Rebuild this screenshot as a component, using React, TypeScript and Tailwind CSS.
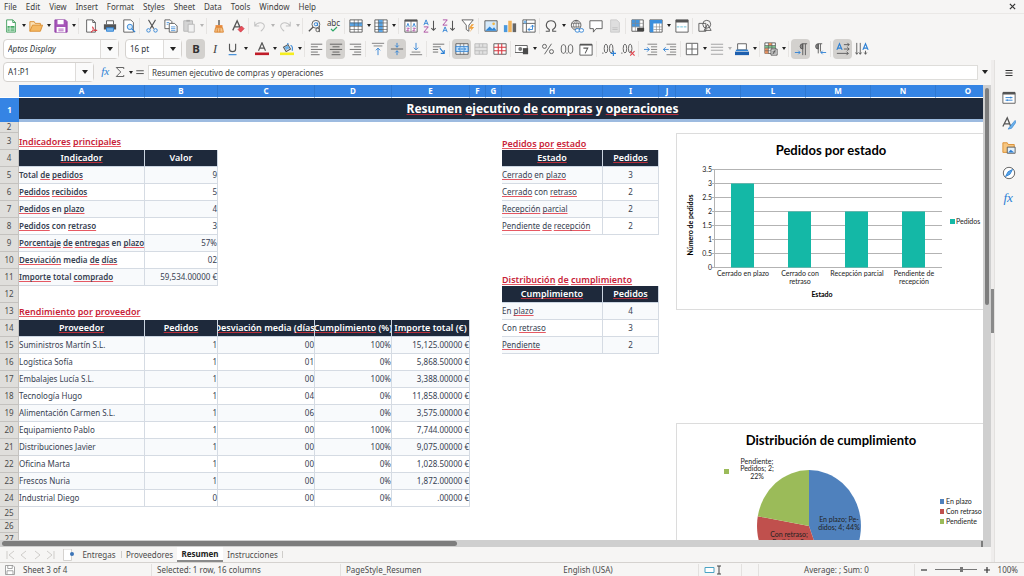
import type { ReactNode } from 'react';
import clsx from 'clsx';

type Cell = { text: string; kind: 'heading' | 'headingLow' | 'head' | 'label' | 'text' | 'plain' | 'num' | 'center' };

const COLUMNS = [
  { name: 'A', width: 126 },
  { name: 'B', width: 73 },
  { name: 'C', width: 97 },
  { name: 'D', width: 77 },
  { name: 'E', width: 78 },
  { name: 'F', width: 16 },
  { name: 'G', width: 16 },
  { name: 'H', width: 101 },
  { name: 'I', width: 56 },
  { name: 'J', width: 17 },
  { name: 'K', width: 65 },
  { name: 'L', width: 65 },
  { name: 'M', width: 65 },
  { name: 'N', width: 65 },
  { name: 'O', width: 65 },
];

const indicators = [
  ['Total de pedidos', '9'],
  ['Pedidos recibidos', '5'],
  ['Pedidos en plazo', '4'],
  ['Pedidos con retraso', '3'],
  ['Porcentaje de entregas en plazo', '57%'],
  ['Desviación media de días', '02'],
  ['Importe total comprado', '59,534.00000 €'],
];

const suppliers = [
  ['Suministros Martín S.L.', '1', '00', '100%', '15,125.00000 €'],
  ['Logística Sofía', '1', '01', '0%', '5,868.50000 €'],
  ['Embalajes Lucía S.L.', '1', '00', '100%', '3,388.00000 €'],
  ['Tecnología Hugo', '1', '04', '0%', '11,858.00000 €'],
  ['Alimentación Carmen S.L.', '1', '06', '0%', '3,575.00000 €'],
  ['Equipamiento Pablo', '1', '00', '100%', '7,744.00000 €'],
  ['Distribuciones Javier', '1', '00', '100%', '9,075.00000 €'],
  ['Oficina Marta', '1', '00', '0%', '1,028.50000 €'],
  ['Frescos Nuria', '1', '00', '0%', '1,872.00000 €'],
  ['Industrial Diego', '0', '00', '0%', '.00000 €'],
];

const cells: Record<string, Cell> = {
  A3: { text: 'Indicadores principales', kind: 'heading' },
  A4: { text: 'Indicador', kind: 'head' },
  B4: { text: 'Valor', kind: 'head' },
  A13: { text: 'Rendimiento por proveedor', kind: 'heading' },
  A14: { text: 'Proveedor', kind: 'head' },
  B14: { text: 'Pedidos', kind: 'head' },
  C14: { text: 'Desviación media (días)', kind: 'head' },
  D14: { text: 'Cumplimiento (%)', kind: 'head' },
  E14: { text: 'Importe total (€)', kind: 'head' },
  H3: { text: 'Pedidos por estado', kind: 'headingLow' },
  H4: { text: 'Estado', kind: 'head' },
  I4: { text: 'Pedidos', kind: 'head' },
  H11: { text: 'Distribución de cumplimiento', kind: 'headingLow' },
  H12: { text: 'Cumplimiento', kind: 'head' },
  I12: { text: 'Pedidos', kind: 'head' },
};

indicators.forEach(([name, value], i) => {
  cells[`A${5 + i}`] = { text: name, kind: 'label' };
  cells[`B${5 + i}`] = { text: value, kind: 'num' };
});
suppliers.forEach((row, i) => {
  cells[`A${15 + i}`] = { text: row[0], kind: 'plain' };
  ['B', 'C', 'D', 'E'].forEach((col, c) => {
    cells[`${col}${15 + i}`] = { text: row[c + 1], kind: 'num' };
  });
});
[['Cerrado en plazo', '3'], ['Cerrado con retraso', '2'], ['Recepción parcial', '2'], ['Pendiente de recepción', '2']].forEach(([name, n], i) => {
  cells[`H${5 + i}`] = { text: name, kind: 'text' };
  cells[`I${5 + i}`] = { text: n, kind: 'center' };
});
[['En plazo', '4'], ['Con retraso', '3'], ['Pendiente', '2']].forEach(([name, n], i) => {
  cells[`H${13 + i}`] = { text: name, kind: 'text' };
  cells[`I${13 + i}`] = { text: n, kind: 'center' };
});

// words that the English dictionary accepts
const KNOWN = ['total', 'en', 'con', 'media', 'valor', 'y', '(%)', '(€)'];

function Spelled({ text }: { text: string }) {
  return (
    <span>
      {text.split(' ').map((word, i) => (
        <span key={i}>
          {i > 0 && ' '}
          {KNOWN.includes(word.toLowerCase()) ? word : (
            <span className="underline decoration-[#e0303c]/80 decoration-1 underline-offset-1 [text-decoration-skip-ink:none]">{word}</span>
          )}
        </span>
      ))}
    </span>
  );
}

function SheetCell({ cell, row }: { cell?: Cell; row: number }) {
  if (!cell) return <td className="p-0" />;
  const { kind, text } = cell;
  if (kind === 'heading' || kind === 'headingLow') {
    return (
      <td className={clsx('p-0 text-[9px] leading-3 font-semibold whitespace-nowrap text-[#c81e3a]', kind === 'heading' ? 'align-middle' : 'align-bottom')}>
        <Spelled text={text} />
      </td>
    );
  }
  if (kind === 'head') {
    return (
      <td className="border-r border-b border-[#cbd5e1] bg-[#1e293b] p-0 text-[9px] leading-3 font-semibold text-white">
        <div className="flex justify-center overflow-hidden whitespace-nowrap"><Spelled text={text} /></div>
      </td>
    );
  }
  return (
    <td
      className={clsx(
        'border-r border-b border-[#d5dbe3] p-0 text-[8px] leading-3 whitespace-nowrap text-[#374151]',
        row % 2 === 1 ? 'bg-[#f8fafc]' : 'bg-white',
        kind === 'label' && 'font-semibold',
        kind === 'num' && 'text-right',
        kind === 'center' && 'text-center',
      )}
    >
      {kind === 'label' || kind === 'text' ? <Spelled text={text} /> : text}
    </td>
  );
}

function rowHeight(n: number) {
  if (n === 2) return 'h-[11px]';
  if (n > 24) return 'h-[13px]';
  return 'h-[17px]';
}

function SheetTable() {
  const rows = Array.from({ length: 26 }, (_, i) => i + 2);
  return (
    <table className="w-[1066px] table-fixed border-separate border-spacing-0">
      <colgroup>
        <col className="w-[19px]" />
        {COLUMNS.map(c => <col key={c.name} style={{ width: c.width }} />)}
        <col className="w-[65px]" />
      </colgroup>
      <thead>
        <tr className="h-[13px] text-[8px] leading-3 font-bold text-white">
          <td className="border-b border-white bg-[#f6f5f4] p-0" />
          {COLUMNS.map(c => <th key={c.name} scope="col" className="border-r border-b border-r-[#2f78d0] border-b-white bg-[#3584e4] p-0">{c.name}</th>)}
          <td className="border-b border-white bg-[#3584e4] p-0" />
        </tr>
      </thead>
      <tbody>
        <tr className="h-6">
          <th scope="row" className="bg-[#3584e4] p-0 text-[8px] leading-3 font-bold text-white">1</th>
          <td colSpan={16} className="border-b-3 border-[#9dbbe0] bg-[#1e293b] p-0 text-center text-[12px] leading-4 font-bold text-white">
            <Spelled text="Resumen ejecutivo de compras y operaciones" />
          </td>
        </tr>
        {rows.map(n => (
          <tr key={n} className={rowHeight(n)}>
            <th scope="row" className="border-r border-b border-[#c4c2bf] bg-[#dfdedb] p-0 text-[8px] leading-[10px] font-normal text-[#4b4b4b]">{n}</th>
            {COLUMNS.map(c => <SheetCell key={c.name} cell={cells[c.name + n]} row={n} />)}
          </tr>
        ))}
      </tbody>
    </table>
  );
}

function BarChart() {
  const ticks = ['3.5', '3', '2.5', '2', '1.5', '1', '0.5', '0'];
  const bars = [
    { lines: ['Cerrado en plazo'], value: 3 },
    { lines: ['Cerrado con', 'retraso'], value: 2 },
    { lines: ['Recepción parcial'], value: 2 },
    { lines: ['Pendiente de', 'recepción'], value: 2 },
  ];
  return (
    <svg width="310" height="177" viewBox="0 0 310 177" className="font-[Lato,sans-serif]" role="img" aria-label="Pedidos por estado">
      <rect x="0.5" y="0.5" width="309" height="176" fill="#fff" stroke="#dcdcdc" />
      <text x="155" y="22" fontSize="13" fontWeight="700" textAnchor="middle">Pedidos por estado</text>
      {ticks.map((t, i) => (
        <g key={t}>
          <line x1="36" x2="266" y1={36.5 + i * 14} y2={36.5 + i * 14} stroke="#b3b3b3" />
          <text x="36" y={39 + i * 14} fontSize="7" textAnchor="end" fill="#222">{t}</text>
        </g>
      ))}
      <line x1="38.5" x2="38.5" y1="36" y2="135" stroke="#b3b3b3" />
      {bars.map((b, i) => (
        <g key={b.lines[0]}>
          <rect x={55 + i * 57} y={134.5 - b.value * 28} width="23" height={b.value * 28} fill="#14b8a6" />
          {b.lines.map((l, j) => (
            <text key={l} x={67 + i * 57} y={143 + j * 8} fontSize="7" textAnchor="middle" fill="#222">{l}</text>
          ))}
        </g>
      ))}
      <text x="146" y="164" fontSize="7" fontWeight="700" textAnchor="middle">Estado</text>
      <text transform="translate(17 92) rotate(-90)" fontSize="7" fontWeight="700" textAnchor="middle">Número de pedidos</text>
      <rect x="274" y="86" width="5" height="5" fill="#14b8a6" />
      <text x="280" y="91" fontSize="7" fill="#222">Pedidos</text>
    </svg>
  );
}

function PieChart() {
  const legend = [['En plazo', '#4f81bd'], ['Con retraso', '#c0504d'], ['Pendiente', '#9bbb59']];
  return (
    <svg width="310" height="177" viewBox="0 0 310 177" className="font-[Lato,sans-serif]" role="img" aria-label="Distribución de cumplimiento">
      <rect x="0.5" y="0.5" width="309" height="176" fill="#fff" stroke="#dcdcdc" />
      <text x="155" y="22" fontSize="13" fontWeight="700" textAnchor="middle">Distribución de cumplimiento</text>
      <path d="M133 103V47A52 56 0 0 1 150.8 155.6Z" fill="#4f81bd" />
      <path d="M133 103L150.8 155.6A52 56 0 0 1 81.8 93.3Z" fill="#c0504d" />
      <path d="M133 103L81.8 93.3A52 56 0 0 1 133 47Z" fill="#9bbb59" />
      <rect x="48" y="46" width="5" height="5" fill="#9bbb59" />
      <g fontSize="7" textAnchor="middle" fill="#222">
        <text x="81" y="41">Pendiente;</text>
        <text x="81" y="48">Pedidos; 2;</text>
        <text x="81" y="56">22%</text>
        <text x="163" y="99">En plazo; Pe-</text>
        <text x="163" y="107">didos; 4; 44%</text>
        <text x="113" y="114">Con retraso;</text>
        <text x="113" y="122">Pedidos; 3;</text>
        <text x="113" y="130">33%</text>
      </g>
      {legend.map(([name, color], i) => (
        <g key={name}>
          <rect x="264" y={76 + i * 10} width="4" height="5" fill={color} />
          <text x="270" y={81 + i * 10} fontSize="7" fill="#222">{name}</text>
        </g>
      ))}
    </svg>
  );
}

// icon strokes
const G = '#555';
const B = '#2a7fd4';
const lines = (d: string, color = G, w = 1) => <path d={d} stroke={color} strokeWidth={w} fill="none" />;

const ICONS: Record<string, ReactNode> = {
  new: <><path d="M3 1h7l3 3v11H3z" fill="#fff" stroke="#3a9a57" /><path d="M10 1v3h3" fill="none" stroke="#3a9a57" /><path d="M4 8h8v6H4z" fill="#43a862" />{lines('M4 10.500h8M4 12.500h8M7 8v6', '#fff', 0.7)}</>,
  open: <><path d="M1 14V3h5l1 2h6v3" fill="#fbe1b5" stroke="#d98a2b" /><path d="M1 14L4 7h11.500l-2.500 7z" fill="#f5b963" stroke="#d98a2b" /></>,
  save: <><path d="M1 1h12l2 2v12H1z" fill="#a655b8" stroke="#8e3aa3" /><path d="M4 1h7v5H4zM3 9h10v6H3z" fill="#fff" />{lines('M5 11.500h6M5 13.500h6', '#a655b8')}</>,
  pdf: <><path d="M3 1h7l3 3v11H3z" fill="#fff" stroke={G} />{lines('M10 1v3h3')}<path d="M8 15c3-2 3-5 2-6s0 4 5 4c-3 0-5 0-7 2z" fill="none" stroke="#d8363f" /></>,
  print: <><path d="M4 6V2h8v4" fill="#fff" stroke={G} /><path d="M1 6h14v6H1z" fill="#555" /><path d="M4 10h8v4H4z" fill="#7ab6ea" stroke={B} /></>,
  preview: <><path d="M2 1h8l3 3v11H2z" fill="#fff" stroke={G} /><circle cx="9" cy="9" r="3" fill="#d6eafa" stroke={B} />{lines('M11 11l4 4', B, 1.5)}</>,
  cut: <>{lines('M4 1l6 10M12 1L6 11', G, 1.2)}<circle cx="4" cy="13" r="2" fill="none" stroke={B} /><circle cx="12" cy="13" r="2" fill="none" stroke={B} /></>,
  copy: <><path d="M1 1h6l2 2v8H1z" fill="#fff" stroke={G} /><path d="M6 5h6l3 3v7H6z" fill="#fff" stroke={G} />{lines('M8 9h5M8 11h5M8 13h5M3 4h3M3 6h2', B, 0.8)}</>,
  paste: <><path d="M2 2h10v12H2z" fill="#d4d4d4" stroke="#b5b5b5" /><path d="M5 1h4v2H5z" fill="#aaa" /><path d="M7 6h7v9H7z" fill="#f1f1f1" stroke="#b5b5b5" /></>,
  clone: <><path d="M7 1h2v6H7z" fill="#777" /><path d="M4 7h8v3H4z" fill="#e8883a" /><path d="M4 10l-1 5h10l-1-5z" fill="#f6c48c" stroke="#d9822b" />{lines('M6 11v4M9 11v4', '#d9822b')}</>,
  clear: <>{lines('M2 13L7 2l4 9M4 9h6', G, 1.5)}<path d="M8 12l4-4 3 3-4 4z" fill="#e8505b" stroke="#c52f3b" strokeWidth=".7" /></>,
  undo: lines('M2 3v5h5M2 8c3-5 10-5 11 0 0 3-2 4-4 6', '#c3c3c3', 1.2),
  redo: lines('M14 3v5H9M14 8c-3-5-10-5-11 0 0 3 2 4 4 6', '#c3c3c3', 1.2),
  find: <><circle cx="9" cy="6" r="4.500" fill="none" stroke={G} />{lines('M6 9l-5 5', G, 1.6)}<circle cx="9" cy="6" r="1.800" fill="none" stroke={B} />{lines('M11 4v4', B)}<circle cx="11" cy="12.500" r="2" fill="none" stroke={G} />{lines('M13 8v7')}</>,
  rowOp: <><path d="M1 1h14v14H1z" fill="#fff" stroke={G} /><path d="M1 4h14v4H1z" fill="#5aa5e6" />{lines('M1 4.500h14M1 8.500h14M1 12h14M6 1v14M10.500 1v14', G, 0.7)}</>,
  colOp: <><path d="M1 1h14v14H1z" fill="#fff" stroke={G} /><path d="M5 1h5v14H5z" fill="#5aa5e6" />{lines('M1 4.500h14M1 8.500h14M1 12h14M5 1v14M10.500 1v14', G, 0.7)}</>,
  sort: <><path d="M1 1h14v14H1z" fill="#fff" stroke={G} /><path d="M1 1h14v2H1z" fill={G} />{lines('M8 2v13', G, 0.7)}{lines('M3 9l1.500-4L6 9M10 9l1.500-4L13 9', B)}{lines('M3 10.500h3l-3 3h3M10 10.500h3l-3 3h3', '#a8449e')}</>,
  sortAsc: <>{lines('M1 7l2.500-6L6 7M2 5h3', B)}{lines('M1 9h5l-5 6h5', '#a8449e')}{lines('M12 2v11M9.500 10.500L12 13l2.500-2.500', G, 1.2)}</>,
  sortDesc: <>{lines('M1 1h5L1 7h5', '#a8449e')}{lines('M1 15l2.500-6L6 15M2 13h3', B)}{lines('M12 2v11M9.500 10.500L12 13l2.500-2.500', G, 1.2)}</>,
  filter: <><path d="M1 1h13l-5 6v7l-3-2V7z" fill="#fff" stroke={G} /><path d="M12 6L9 11h3l-2 4 5-6h-3l3-3z" fill="#f0a13c" /></>,
  image: <><path d="M1 2h14v12H1z" fill="#d5e9fa" stroke={G} /><path d="M1.500 13.500l5-5 3 3 2-2 3 4z" fill="#2f86d6" /><circle cx="11" cy="5.500" r="1.500" fill="#f2b544" /></>,
  chart: <><path d="M1 7h4v8H1z" fill="#4b98dc" /><path d="M6 2h4v13H6z" fill="#f0b25a" /><path d="M11 5h4v10h-4z" fill="#666" /></>,
  pivot: <><path d="M1 1h14v14H1z" fill="#fff" stroke={G} />{lines('M1 5h14M5 1v14', G)}<path d="M2 2h3v3H2z" fill="#7bb8ec" />{lines('M7 12h5V7M9 10l-2 2 2 2M10 9l2-2 2 2', B)}</>,
  omega: lines('M2 14h4v-2C0 8 3 2 8 2s8 6 2 10v2h4', G, 1.3),
  link: <><circle cx="7" cy="7" r="5.500" fill="none" stroke={G} />{lines('M2 5h10M2 9h10M7 1.500v11M7 1.500c-4 4-4 7 0 11M7 1.500c4 4 4 7 0 11', G, 0.7)}<rect x="6" y="11" width="5" height="4" rx="2" fill="#fff" stroke={B} /><rect x="10.500" y="11" width="5" height="4" rx="2" fill="#fff" stroke={B} /></>,
  comment: <path d="M1 2h14v9H8l-3 4v-4H1z" fill="#fff" stroke={G} />,
  headers: <><path d="M3 1h7l3 3v11H3z" fill="#dedede" stroke="#c8c8c8" />{lines('M5 12h6M5 10h6', '#c0c0c0')}</>,
  printArea: <><path d="M1 1h13v13H1z" fill="#fff" stroke={G} /><path d="M1 1h9v8H1z" fill="#4595dc" />{lines('M1 5h13M1 9h13M5 1v13M10 1v13', '#888', 0.7)}<path d="M7 10h8v4H7z" fill="#444" /></>,
  freeze: <><path d="M1 1h14v14H1z" fill="#fff" stroke={G} /><path d="M1 1h14v4H1zM1 1h4v14H1z" fill="#3b8fdd" />{lines('M5 9h10M5 12h10M8.500 5v10M12 5v10', '#888', 0.7)}</>,
  split: <><path d="M1 1h14v14H1z" fill="#fff" stroke={G} /><path d="M1 1h14v3H1z" fill={G} /><path d="M2 9h12" stroke="#5ab9d6" strokeDasharray="3 1" /></>,
  shapes: <><path d="M1 5h8v9H1z" fill="none" stroke={G} /><circle cx="10" cy="6" r="4.500" fill="none" stroke={G} />{lines('M7 13l4-7 4 7z')}</>,
  bold: <text x="8" y="13" fontSize="13" fontWeight="700" textAnchor="middle" fill="#333">B</text>,
  italic: <text x="8" y="13" fontSize="14" fontStyle="italic" textAnchor="middle" fill="#444" className="font-[Liberation_Serif,serif]">I</text>,
  underline: <>{lines('M4 2v6c0 4 7 4 7 0V2', G, 1.3)}{lines('M3 14.500h9', B, 1.2)}</>,
  fontColor: <>{lines('M4 10L8 1l4 9M5.500 7h5', G, 1.4)}<path d="M0 12h16v3H0z" fill="#c01c28" /></>,
  highlight: <>{lines('M4 6l5-3 3 5-5 3z', G, 1.2)}<path d="M5 6l4-2 2 3-4 2z" fill="#6eb2e8" />{lines('M9 3V1M12 4c3 0 2 5 2 6', B, 1.2)}<path d="M0 12h16v3H0z" fill="#f6ee20" /></>,
  left: lines('M1 2.500h13M1 5.500h8M1 8.500h13M1 11.500h8M1 14.500h10', '#666'),
  center: lines('M1 2.500h14M4 5.500h8M1 8.500h14M4 11.500h8M3 14.500h10', '#555'),
  right: lines('M2 2.500h13M7 5.500h8M2 8.500h13M7 11.500h8M5 14.500h10', '#666'),
  top: <>{lines('M1 1.500h14M3 4.500h10', '#777')}{lines('M8 15V7M5.500 9.500L8 7l2.500 2.500', B)}</>,
  middle: <>{lines('M1 8h14', '#555')}{lines('M8 1v5M8 15v-5M6 4l2 2 2-2M6 12l2-2 2 2', B)}</>,
  bottom: <>{lines('M1 14.500h14M3 11.500h10', '#777')}{lines('M8 1v8M5.500 6.500L8 9l2.500-2.500', B)}</>,
  wrap: <>{lines('M1 2.500h13M1 5.500h9M1 8.500h6M1 11.500h6', '#666')}{lines('M9 7l5 6M14 9v4h-4', B, 1.2)}</>,
  merge: <><path d="M1 2h14v12H1z" fill="#fff" stroke={G} /><path d="M1 5h14v6H1z" fill="#bcdcf7" stroke={B} />{lines('M4 8h8M6 6L4 8l2 2M10 6l2 2-2 2', B)}{lines('M6 2v3M10 2v3M6 11v3M10 11v3', G, 0.7)}</>,
  mergeCells: <><path d="M1 2h14v12H1z" fill="#e2e2e2" stroke="#b9b9b9" />{lines('M1 6h14M1 10h14M6 2v4M10 2v4M6 10v4M10 10v4', '#b9b9b9')}</>,
  unmerge: <><path d="M1 2h14v12H1z" fill="#fff" stroke={G} />{lines('M1 6h14M1 10h14M6 2v12M10 2v12', '#d8363f', 1.2)}</>,
  currency: <><path d="M0 4h14v8H0z" fill="#fff" stroke={G} /><circle cx="6" cy="8" r="2.200" fill="#777" /><path d="M9 7h6v7H9z" fill="#4a4a4a" /></>,
  percent: <><circle cx="4" cy="5" r="2.300" fill="none" stroke={G} /><circle cx="12" cy="11" r="2.300" fill="none" stroke={G} />{lines('M12 2L4 14')}</>,
  number: <><ellipse cx="4" cy="8" rx="2.600" ry="5" fill="none" stroke={G} /><ellipse cx="12" cy="8" rx="2.600" ry="5" fill="none" stroke={G} />{lines('M8 12v1.500')}</>,
  date: <><path d="M1 3h14v12H1z" fill="#fff" stroke={G} /><path d="M1 2h14v2H1z" fill={G} />{lines('M5 7h5l-3 6', G, 1.2)}</>,
  addDecimal: <>{lines('M1 12v1.500')}<ellipse cx="4.500" cy="7.500" rx="2" ry="5" fill="none" stroke={G} /><ellipse cx="10.500" cy="7.500" rx="2" ry="5" fill="none" stroke={G} />{lines('M10 13h6M13 10v6', B, 1.3)}</>,
  delDecimal: <>{lines('M1 12v1.500')}<ellipse cx="4.500" cy="7.500" rx="2" ry="5" fill="none" stroke={G} /><ellipse cx="10.500" cy="7.500" rx="2" ry="5" fill="none" stroke={G} />{lines('M10.500 10.500l5 5M15.500 10.500l-5 5', '#e0444e', 1.3)}</>,
  indent: <>{lines('M4 2.500h11M8 5.500h7M8 8.500h7M8 11.500h7M4 14.500h11', '#777')}{lines('M0 8.500h6M3.500 6L6 8.500 3.500 11', B)}</>,
  outdent: <>{lines('M4 2.500h11M8 5.500h7M8 8.500h7M8 11.500h7M4 14.500h11', '#777')}{lines('M0.500 8.500h6M3 6L.5 8.500 3 11', B)}</>,
  borders: <><path d="M1.500 1.500h13v13h-13z" fill="#fff" stroke={G} />{lines('M8 2v12M2 8h12')}</>,
  borderStyle: lines('M1 2.500h14M1 6h14M1 9.500h14M1 14h14', '#a5a5a5', 1.2),
  borderColor: <><path d="M3 2h10v7H3z" fill="#fff" stroke={G} />{lines('M1 9.500h14', B, 1.5)}<path d="M0 11h16v4H0z" fill="#1d5fae" /></>,
  conditional: <><path d="M1 1h12v12H1z" fill="#fff" stroke={G} /><path d="M1 4h12v3H1z" fill="#7cc08d" /><path d="M1 7h4v6H1zM5 1h4v3H5z" fill="#e99361" />{lines('M5 1v12M9 1v12M1 4h12M1 7h12M1 10h12', G, 0.7)}<path d="M8 8h7v7H8z" fill="#eee" stroke={G} />{lines('M9.500 10.500h4M9.500 12.500h4M13 9l-3 5')}</>,
  ltr: <><path d="M10 2a3 3 0 0 0 0 6z" fill="#888" stroke={G} />{lines('M15 2h-5v13M13 2v13', G)}{lines('M1 12h6M5 10l2 2-2 2', B)}</>,
  rtl: <><path d="M6 2a3 3 0 0 0 0 6z" fill="#888" stroke={G} />{lines('M10.500 2H6v11M8.500 2v9', G)}{lines('M15 12H9M11 10l-2 2 2 2', B)}</>,
  textHorizontal: <>{lines('M1 9l3-7 3 7M2 7h4', B, 1.3)}{lines('M9 3h6M9 8h6M1 13h13M13 1l2 2-2 2M13 6l2 2-2 2M12 11l2 2-2 2')}</>,
  textVertical: <>{lines('M9 9l3-7 3 7M10 7h4', B, 1.3)}{lines('M2 1v13M6 1v13M12 10v4M.5 12L2 14l1.500-2M4.500 12L6 14l1.500-2M10.500 12l1.500 2 1.500-2')}</>,
  fx: <text x="7" y="12" fontSize="15" fontStyle="italic" textAnchor="middle" fill="#2a7fd4" className="font-[Liberation_Serif,serif]">fx</text>,
  sum: lines('M13 4V2H3l6 6-6 6h10v-2', G, 1.2),
  equals: lines('M2 6h12M2 10.500h12', G, 1.6),
  menu: lines('M1 3h14M1 8h14M1 13h14', '#333', 2),
  properties: <><path d="M1 2h14v12H1z" fill="#fff" stroke={G} /><path d="M1 1h14v3H1z" fill={G} />{lines('M4 7.500h8M4 10.500h8M10 6.500v2M6 9.500v2', B)}</>,
  styles: <>{lines('M1 12L6 2l4 10M3 9h6', G, 1.5)}<path d="M15 5l-6 7-2 3 4-1 5-7z" fill="#6eb2e8" stroke={B} strokeWidth=".7" /></>,
  gallery: <><path d="M1 13V2h5l1 2h7v9z" fill="#f7c680" stroke="#d98a2b" /><path d="M6 7h9v7H6z" fill="#e3f0fb" stroke={G} /><path d="M7 13l3-3 4 3z" fill={B} /></>,
  navigator: <><circle cx="8" cy="8" r="6.500" fill="#fff" stroke={G} /><path d="M12 4L7 6.500 4 12l5-2.500z" fill="#5aa5e6" stroke={B} /></>,
  disk: <><path d="M2 2h10l2 2v10H2z" fill="#fff" stroke="#888" />{lines('M5 2v4h6V2M4 14V9h8v5', '#888')}</>,
};

function Icon({ name }: { name: string }) {
  return <svg viewBox="0 0 16 16" className="size-[14px]" aria-hidden="true">{ICONS[name]}</svg>;
}

const Caret = () => <svg viewBox="0 0 4 3" className="h-[3px] w-1" aria-hidden="true"><path d="M0 0h4L2 3z" fill="#222" /></svg>;

type Tool = string | { icon: string; menu?: boolean; on?: boolean; off?: boolean };

// '|' is a separator, ' ' is a blank gap
const mainTools: Tool[] = [
  { icon: 'new', menu: true }, { icon: 'open', menu: true }, { icon: 'save', menu: true }, '|',
  'pdf', 'print', 'preview', '|',
  'cut', 'copy', { icon: 'paste', menu: true, off: true }, '|',
  'clone', 'clear', '|',
  { icon: 'undo', menu: true, off: true }, { icon: 'redo', menu: true, off: true }, '|',
  'find', 'spell', '|',
  { icon: 'rowOp', menu: true }, { icon: 'colOp', menu: true }, '|',
  'sort', 'sortAsc', 'sortDesc', 'filter', '|',
  'image', 'chart', 'pivot', '|',
  { icon: 'omega', menu: true }, 'link', 'comment', 'headers', '|',
  'printArea', { icon: 'freeze', menu: true }, 'split', '|',
  'shapes',
];

const formatTools: Tool[] = [
  { icon: 'bold', on: true }, 'italic', { icon: 'underline', menu: true }, ' ',
  { icon: 'fontColor', menu: true }, { icon: 'highlight', menu: true }, '|',
  'left', { icon: 'center', on: true }, 'right', '|',
  'top', { icon: 'middle', on: true }, 'bottom', '|',
  'wrap', '|',
  { icon: 'merge', on: true }, 'mergeCells', 'unmerge', '|',
  { icon: 'currency', menu: true }, 'percent', 'number', 'date', '|',
  'addDecimal', 'delDecimal', '|',
  'indent', 'outdent', '|',
  { icon: 'borders', menu: true }, { icon: 'borderStyle', menu: true, off: true }, { icon: 'borderColor', menu: true }, '|',
  { icon: 'conditional', menu: true }, '|',
  { icon: 'ltr', on: true }, 'rtl', '|',
  { icon: 'textHorizontal', on: true }, 'textVertical',
];

function Tools({ items }: { items: Tool[] }) {
  return (
    <>
      {items.map((item, i) => {
        if (item === '|') return <span key={i} className="mx-px h-4 w-0.5 shrink-0 border-l border-[#e6e4e2]" />;
        if (item === ' ') return <span key={i} className="w-1 shrink-0" />;
        const tool = typeof item === 'string' ? { icon: item } : item;
        return (
          <span key={i} className="flex shrink-0 items-center">
            <button
              type="button"
              aria-label={tool.icon}
              className={clsx('flex h-5 items-center justify-center rounded-sm', tool.menu ? 'w-[18px]' : 'w-[19px]', tool.on && 'bg-[#d3d1ce]')}
            >
              {tool.icon === 'spell' ? (
                <span className="flex flex-col items-center text-[8px] leading-[7px] text-[#444]">
                  abc
                  <svg viewBox="0 0 8 6" className="h-1.5 w-2" aria-hidden="true"><path d="M1 3l2 2 4-4" stroke="#2ea868" strokeWidth="1.2" fill="none" /></svg>
                </span>
              ) : <Icon name={tool.icon} />}
            </button>
            {tool.menu && (
              <button type="button" aria-label={`${tool.icon} options`} className={clsx('flex h-5 w-[7px] items-center justify-center', tool.off && 'opacity-30')}>
                <Caret />
              </button>
            )}
          </span>
        );
      })}
    </>
  );
}

function Combo({ label, value, className, italic }: { label: string; value: string; className: string; italic?: boolean }) {
  return (
    <div className={clsx('flex h-5 shrink-0 rounded-sm border border-[#d5d2cf] bg-white', className)}>
      <input aria-label={label} defaultValue={value} className={clsx('min-w-0 flex-1 px-1 text-[8px] text-[#2e3436] outline-none', italic && 'italic')} />
      <button type="button" aria-label={`${label} list`} className="flex w-[18px] items-center justify-center border-l border-[#dedcda] bg-[#fafafa]">
        <svg viewBox="0 0 6 4" className="h-1 w-1.5" aria-hidden="true"><path d="M0 0h6L3 4z" fill="#222" /></svg>
      </button>
    </div>
  );
}

function MenuBar() {
  const items = ['File', 'Edit', 'View', 'Insert', 'Format', 'Styles', 'Sheet', 'Data', 'Tools', 'Window', 'Help'];
  return (
    <nav className="flex h-[14px] shrink-0 items-center gap-[9px] border-b border-[#eae8e6] px-1 text-[8px] leading-3 text-[#3d3d3d]">
      {items.map(m => <button key={m} type="button">{m}</button>)}
      <button type="button" aria-label="Close" className="mr-1 ml-auto">
        <svg viewBox="0 0 8 8" className="size-[7px]" aria-hidden="true"><path d="M1 1l6 6M7 1L1 7" stroke="#333" strokeWidth="1.4" /></svg>
      </button>
    </nav>
  );
}

function FormulaBar() {
  return (
    <div className="flex h-[25px] shrink-0 items-center pb-px pl-[3px]">
      <Combo label="Name Box" value="A1:P1" className="w-[91px]" />
      <button type="button" aria-label="Function Wizard" className="ml-1.5 flex w-3 justify-center"><Icon name="fx" /></button>
      <button type="button" aria-label="Select Function" className="flex w-4 justify-center"><svg viewBox="0 0 16 16" className="size-3" aria-hidden="true">{ICONS.sum}</svg></button>
      <span className="flex w-1.5 justify-center"><Caret /></span>
      <button type="button" aria-label="Formula" className="flex w-3 justify-center"><svg viewBox="0 0 16 16" className="size-[10px]" aria-hidden="true">{ICONS.equals}</svg></button>
      <input aria-label="Input line" defaultValue="Resumen ejecutivo de compras y operaciones" className="ml-0.5 h-[15px] min-w-0 flex-1 border border-[#deddda] bg-white px-[3px] text-[8px] text-[#3d3d3d] outline-none" />
      <button type="button" aria-label="Expand" className="flex w-[13px] justify-center">
        <svg viewBox="0 0 6 4" className="h-1 w-1.5" aria-hidden="true"><path d="M0 0h6L3 4z" fill="#222" /></svg>
      </button>
    </div>
  );
}

function SheetTabs() {
  return (
    <div className="flex h-[15px] shrink-0 items-stretch text-[8px] leading-3 text-[#4b4b4b]">
      <div className="flex w-[59px] items-center gap-px pl-[5px]">
        {['M2 2v8M9 2L4 6l5 4', 'M8 2L3 6l5 4', 'M4 2l5 4-5 4', 'M3 2l5 4-5 4M10 2v8'].map(d => (
          <button key={d} type="button" aria-label="Scroll sheets"><svg viewBox="0 0 12 12" className="size-3" aria-hidden="true"><path d={d} stroke="#cfcdca" fill="none" /></svg></button>
        ))}
      </div>
      <button type="button" aria-label="Add sheet" className="ml-1 flex w-[18px] items-center">
        <svg viewBox="0 0 14 12" className="h-3 w-[14px]" aria-hidden="true"><path d="M.5 0h8v11.500h-8z" fill="#fff" stroke="#d5d2cf" /><circle cx="9" cy="5" r="2" fill="#3c74b8" /></svg>
      </button>
      <button type="button" className="w-9">Entregas</button>
      <span className="my-1 ml-1 border-l border-[#cfcdca]" />
      <button type="button" className="w-[55px]">Proveedores</button>
      <button type="button" className="w-[46px] border-b-2 border-[#8a8a8a] bg-white font-bold text-[#222]">Resumen</button>
      <button type="button" className="w-[59px]">Instrucciones</button>
      <span className="my-1 border-l border-[#cfcdca]" />
    </div>
  );
}

function StatusBar() {
  return (
    <footer className="flex h-[14px] shrink-0 items-center border-t border-[#d5d2cf] text-[8px] leading-3 text-[#4b4b4b]">
      <div className="flex w-[151px] items-center gap-[7px] pl-1"><svg viewBox="0 0 16 16" className="size-3" aria-hidden="true">{ICONS.disk}</svg>Sheet 3 of 4</div>
      <div className="w-[189px] border-l border-[#e3e1df] pl-[5px]">Selected: 1 row, 16 columns</div>
      <div className="w-[138px] border-l border-[#e3e1df] pl-[5px]">PageStyle_Resumen</div>
      <div className="flex-1 text-center">English (USA)</div>
      <div className="w-[43px] border-l border-[#e3e1df] pl-[5px]">
        <svg viewBox="0 0 18 12" className="h-3 w-[18px]" aria-hidden="true"><path d="M1 3.500h9v5H1z" fill="#fff" stroke="#4aa3c4" /><path d="M13 2h4M13 10h4M15 2v8" stroke="#444" fill="none" /></svg>
      </div>
      <div className="h-3 w-[18px] border-x border-[#e3e1df]" />
      <div className="w-[155px] text-center">Average: ; Sum: 0</div>
      <div className="flex w-[110px] items-center justify-between border-l border-[#e3e1df] pr-1.5 pl-1.5">
        <button type="button" aria-label="Zoom out"><svg viewBox="0 0 6 6" className="size-1.5"><path d="M0 3h6" stroke="#333" strokeWidth="1.2" /></svg></button>
        <input
          type="range"
          aria-label="Zoom"
          defaultValue={65}
          className="h-2 w-[42px] appearance-none bg-transparent [&::-webkit-slider-runnable-track]:h-px [&::-webkit-slider-runnable-track]:bg-[#777] [&::-webkit-slider-thumb]:-mt-0.5 [&::-webkit-slider-thumb]:h-[5px] [&::-webkit-slider-thumb]:w-[3px] [&::-webkit-slider-thumb]:appearance-none [&::-webkit-slider-thumb]:bg-[#777]"
        />
        <button type="button" aria-label="Zoom in"><svg viewBox="0 0 6 6" className="size-1.5"><path d="M0 3h6M3 0v6" stroke="#333" strokeWidth="1.2" /></svg></button>
        <span>100%</span>
      </div>
    </footer>
  );
}

export default function App() {
  return (
    <div className="flex h-screen flex-col overflow-hidden bg-[#f6f5f4] font-['Noto_Sans',sans-serif]">
      <MenuBar />
      <div className="flex h-[23px] shrink-0 items-center pl-0.5"><Tools items={mainTools} /></div>
      <div className="flex h-[23px] shrink-0 items-center pl-[3px]">
        <Combo label="Font Name" value="Aptos Display" className="mr-1.5 w-[116px]" italic />
        <Combo label="Font Size" value="16 pt" className="mr-1 w-[57px]" />
        <Tools items={formatTools} />
      </div>
      <div className="flex min-h-0 flex-1">
        <div className="flex min-w-0 flex-1 flex-col">
          <FormulaBar />
          <div className="flex min-h-0 flex-1">
            <main className="relative min-w-0 flex-1 overflow-hidden bg-white">
              <SheetTable />
              <div className="absolute top-12 left-[676px]"><BarChart /></div>
              <div className="absolute top-[338px] left-[676px]"><PieChart /></div>
            </main>
            <div className="w-2 bg-[#cfcfcf] px-0.5 pt-[3px]"><div className="h-[48%] rounded-full bg-[#7d7d7d]" /></div>
          </div>
          <div className="flex h-[7px] shrink-0 items-center bg-[#cfcfcf] pl-0.5">
            <div className="h-[5px] w-[46%] rounded-full bg-[#7d7d7d]" />
            <div className="mr-2 ml-auto h-1.5 w-0.5 bg-[#7d7d7d]" />
          </div>
          <SheetTabs />
        </div>
        <div className="flex w-[3px] items-center bg-[#efedec]"><div className="h-11 w-full bg-[#8a8a8a]" /></div>
        <aside className="flex w-[30px] flex-col items-center border-l border-[#e3e1df] pr-0.5">
          {['menu', 'properties', 'styles', 'gallery', 'navigator', 'fx'].map(name => (
            <button key={name} type="button" aria-label={name} className="flex h-[25px] items-center">
              {name === 'menu' ? <svg viewBox="0 0 16 16" className="size-2" aria-hidden="true">{ICONS.menu}</svg> : <Icon name={name} />}
            </button>
          ))}
        </aside>
      </div>
      <StatusBar />
    </div>
  );
}
